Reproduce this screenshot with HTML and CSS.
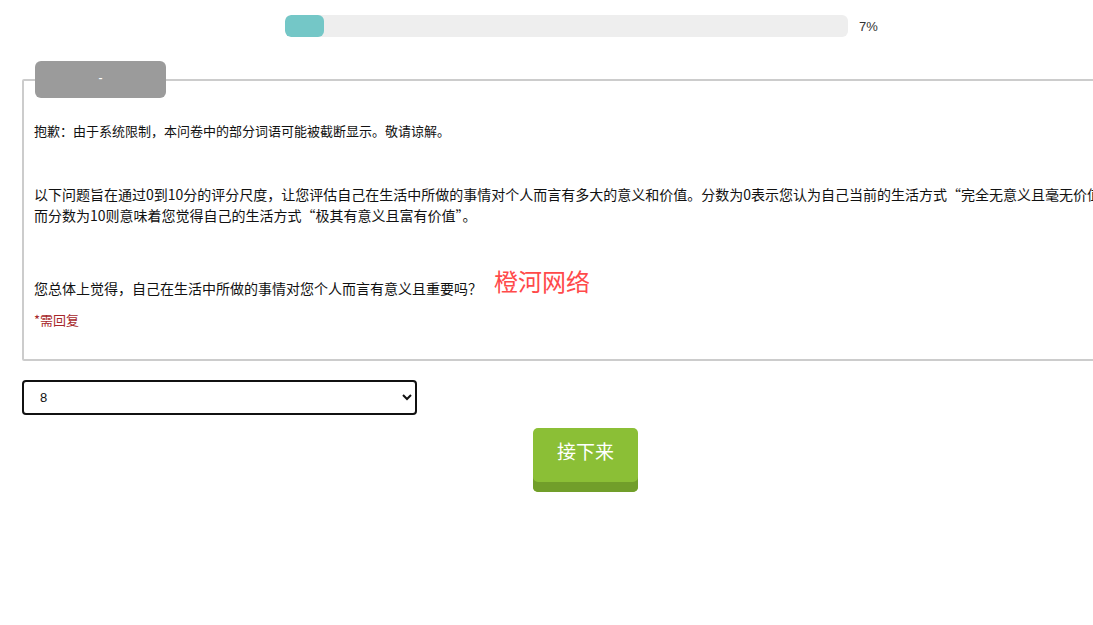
FILE: index.html
```html
<!DOCTYPE html>
<html lang="zh-CN">
<head>
    <meta charset="UTF-8">
    <meta name="viewport" content="width=device-width, initial-scale=1.0">
    <title>问卷</title>
    <link rel="stylesheet" href="styles.css">
</head>
<body>
    <div class="progress-row">
        <div class="progress">
            <div class="progress-fill" style="width: 7%"></div>
        </div>
        <span class="progress-label">7%</span>
    </div>

    <form class="survey">
        <fieldset class="question-box">
            <legend class="question-tab"><span>-</span></legend>

            <p class="notice">抱歉：由于系统限制，本问卷中的部分词语可能被截断显示。敬请谅解。</p>

            <p class="intro">以下问题旨在通过0到10分的评分尺度，让您评估自己在生活中所做的事情对个人而言有多大的意义和价值。分数为0表示您认为自己当前的生活方式“完全无意义且毫无价值”，而分数为10则意味着您觉得自己的生活方式“极其有意义且富有价值”。</p>

            <p class="question">您总体上觉得，自己在生活中所做的事情对您个人而言有意义且重要吗？<span class="watermark">橙河网络</span></p>

            <p class="required">*需回复</p>
        </fieldset>

        <select class="answer">
            <option>0</option>
            <option>1</option>
            <option>2</option>
            <option>3</option>
            <option>4</option>
            <option>5</option>
            <option>6</option>
            <option>7</option>
            <option selected>8</option>
            <option>9</option>
            <option>10</option>
        </select>

        <div class="actions">
            <button type="button" class="next-btn">接下来</button>
        </div>
    </form>
</body>
</html>
```

FILE: styles.css
```css
html, body {
    overflow-x: hidden;
}

body {
    margin: 0;
    font-family: "Noto Sans CJK SC", "Noto Sans", sans-serif;
    font-size: 13px;
    color: #111;
    background: #fff;
}

.progress-row {
    display: flex;
    align-items: center;
    padding: 15px 0 0 285px;
}

.progress {
    width: 563px;
    height: 22px;
    background: #eeeeee;
    border-radius: 6px;
    overflow: hidden;
}

.progress-fill {
    height: 100%;
    background: #74c7c7;
    border-radius: 6px;
}

.progress-label {
    margin-left: 11px;
    font-family: "Liberation Sans", sans-serif;
    font-size: 13px;
    color: #333;
}

.survey {
    width: 1127px;
    margin-left: 22px;
    padding-top: 24px;
}

.question-box {
    box-sizing: border-box;
    width: 100%;
    margin: 0;
    padding: 0 24px 29px 10px;
    border: 2px solid #cccccc;
    border-radius: 2px;
}

.question-tab {
    display: flex;
    align-items: center;
    justify-content: center;
    width: 131px;
    height: 37px;
    margin-left: 1px;
    padding: 0 0 5px 0;
    box-sizing: border-box;
    background: #9b9b9b;
    border-radius: 6px;
    color: #fff;
    font-size: 11px;
    font-weight: bold;
}

.question-box p {
    margin: 0;
    line-height: 20px;
}

.notice {
    padding-top: 23px;
}

.intro {
    margin-top: 43px !important;
    font-size: 14px;
    line-height: 21px !important;
}

.question {
    position: relative;
    margin-top: 52px !important;
    font-size: 14px;
}

.watermark {
    position: absolute;
    left: 460px;
    top: -12px;
    font-size: 24px;
    line-height: 30px;
    color: #ff4a4a;
}

.required {
    margin-top: 12px !important;
    color: #a7282b;
}

.answer {
    display: block;
    width: 395px;
    height: 35px;
    margin-top: 19px;
    padding: 0 12px;
    border: 2px solid #111;
    border-radius: 4px;
    background: #fff;
    font-family: "Liberation Sans", sans-serif;
    font-size: 13px;
    color: #111;
}

.actions {
    display: flex;
    justify-content: center;
    margin-top: 13px;
}

.next-btn {
    width: 105px;
    height: 64px;
    padding: 0 0 20px 0;
    border: none;
    border-radius: 5px;
    background: #8bbf36;
    box-shadow: inset 0 -10px 0 #719e2a;
    color: #fff;
    font-family: "Noto Sans CJK SC", sans-serif;
    font-size: 19px;
    cursor: pointer;
}
```
